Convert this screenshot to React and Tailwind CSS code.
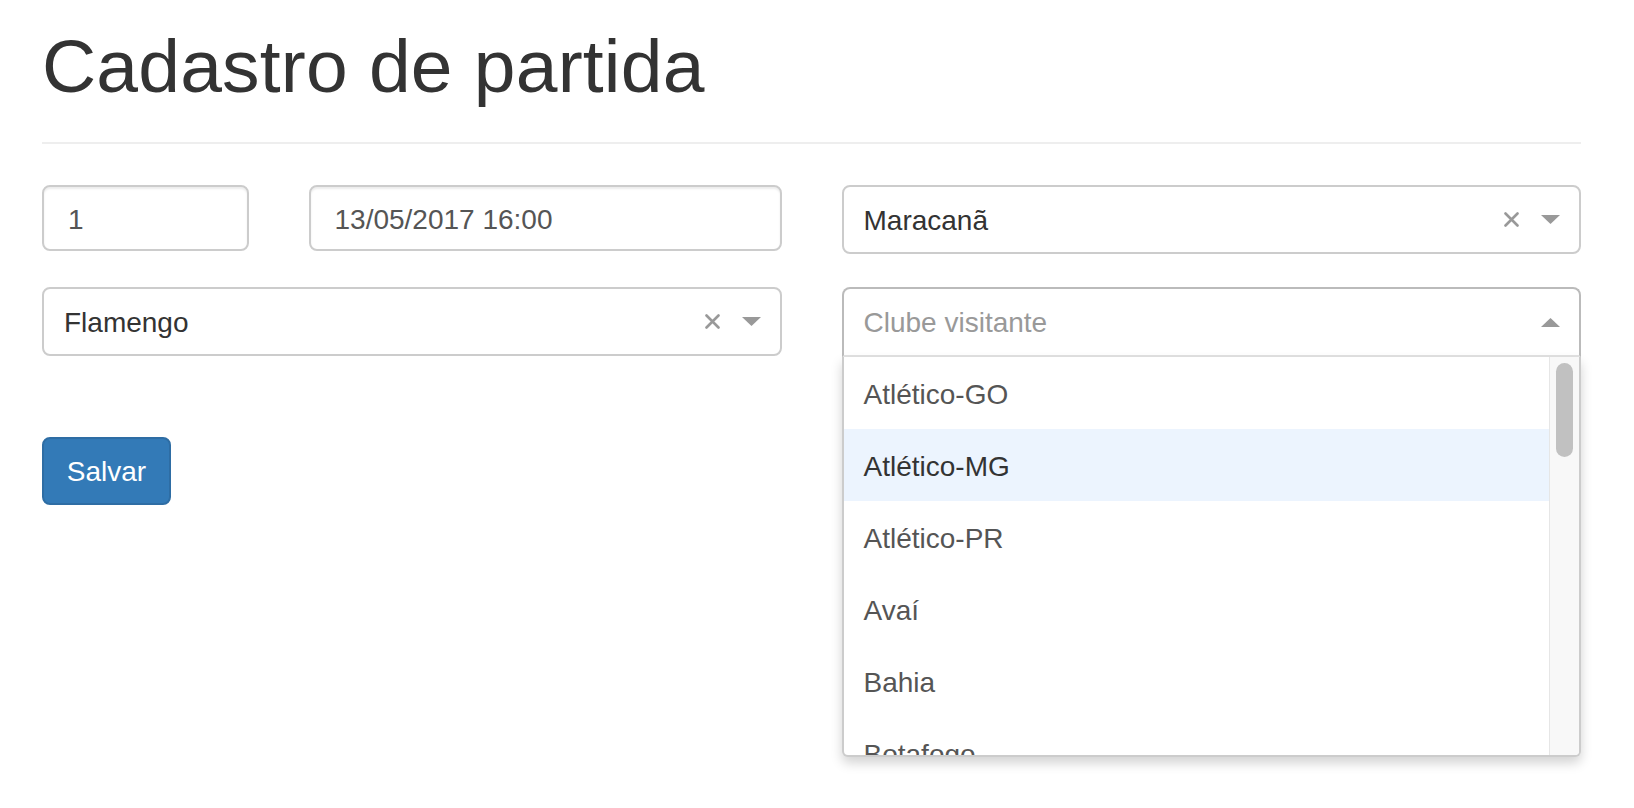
import { useState } from "react";

const clubes = ["Atlético-GO", "Atlético-MG", "Atlético-PR", "Avaí", "Bahia", "Botafogo"];

function ClearIcon() {
  return (
    <svg width="15" height="15" viewBox="0 0 15 15" className="shrink-0">
      <path d="M1.5 1.5 L13.5 13.5 M13.5 1.5 L1.5 13.5" stroke="#999" strokeWidth="2.6" strokeLinecap="round" />
    </svg>
  );
}

function Caret({ up }) {
  return (
    <svg width="19" height="9" viewBox="0 0 19 9" className="shrink-0">
      <path d={up ? "M0 9 L9.5 0 L19 9 Z" : "M0 0 L19 0 L9.5 9 Z"} fill="#999" />
    </svg>
  );
}

function Select({ value }) {
  return (
    <div className="flex h-[69px] items-center rounded-[8px] border-2 border-[#ccc] bg-white pl-[20px] pr-[19px] text-[28px] text-[#333]">
      <span className="flex-1 pt-[2px]">{value}</span>
      <ClearIcon />
      <span className="ml-[22px]">
        <Caret />
      </span>
    </div>
  );
}

function OpenSelect() {
  const [hover] = useState(1);

  return (
    <div className="relative">
      <div className="flex h-[70px] items-center rounded-t-[8px] border-2 border-[#bbb] border-b-[#e2e2e2] bg-white pl-[20px] pr-[19px] text-[28px] text-[#999]">
        <span className="flex-1 pt-[2px]">Clube visitante</span>
        <Caret up />
      </div>
      <div className="absolute left-0 right-0 top-full z-10 flex h-[400px] overflow-hidden rounded-b-[6px] border-2 border-t-0 border-[#ccc] bg-white shadow-[0_6px_12px_rgba(0,0,0,0.175)]">
        <ul className="flex-1 overflow-hidden">
          {clubes.map((c, i) => (
            <li
              key={c}
              className={
                "flex h-[72px] shrink-0 items-center pl-[20px] pt-[3px] text-[28px] " +
                (i === hover ? "bg-[#ecf4fe] text-[#333]" : "text-[#555]")
              }
            >
              {c}
            </li>
          ))}
        </ul>
        <div className="w-[30px] border-l border-[#e6e6e6] bg-[#f8f8f8] pl-[6px] pt-[6px]">
          <div className="h-[94px] w-[17px] rounded-full bg-[#c1c1c1]" />
        </div>
      </div>
    </div>
  );
}

export default function App() {
  return (
    <div className="min-h-screen bg-white font-['Liberation_Sans',Arial,sans-serif] text-[#333]">
      <div className="ml-[42px] w-[1539px]">
        <h1 className="pt-[27px] pb-[36px] text-[75px] leading-[79px] tracking-[0.2px]">Cadastro de partida</h1>
        <hr className="border-0 border-t-2 border-[#eee]" />

        <div className="mt-[41px] grid grid-cols-2 items-start gap-x-[60px] gap-y-[33px]">
          <div className="grid grid-cols-3 gap-x-[60px]">
            <input
              defaultValue="1"
              className="h-[66px] rounded-[8px] border-2 border-[#ccc] px-[24px] pt-[3px] text-[28px] text-[#555] shadow-[inset_0_2px_2px_rgba(0,0,0,0.075)] outline-none"
            />
            <input
              defaultValue="13/05/2017 16:00"
              className="col-span-2 h-[66px] rounded-[8px] border-2 border-[#ccc] px-[24px] pt-[3px] text-[28px] text-[#555] shadow-[inset_0_2px_2px_rgba(0,0,0,0.075)] outline-none"
            />
          </div>
          <Select value="Maracanã" />
          <div className="h-[70px]">
            <Select value="Flamengo" />
          </div>
          <OpenSelect />
        </div>

        <button className="mt-[80px] h-[68px] w-[129px] rounded-[8px] border-2 border-[#2e6da4] bg-[#337ab7] pt-[2px] text-[28px] text-white">
          Salvar
        </button>
      </div>
    </div>
  );
}
